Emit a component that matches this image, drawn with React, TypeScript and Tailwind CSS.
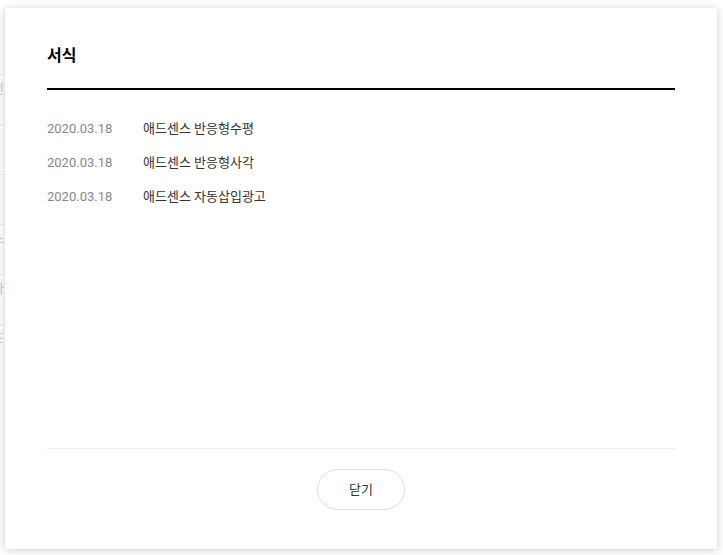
const POSTS = [
  { date: '2020.03.18', title: '애드센스 반응형수평' },
  { date: '2020.03.18', title: '애드센스 반응형사각' },
  { date: '2020.03.18', title: '애드센스 자동삽입광고' },
];

const BACKDROP_ROWS = ['전', '', '', '스', '아', '조'];

export default function App() {
  return (
    <div className="relative h-[555px] w-[723px] overflow-hidden bg-white font-['Roboto','Noto_Sans_CJK_KR',sans-serif]">
      {/* page behind the layer, mostly hidden */}
      <div className="-ml-[8px] flex w-[60px] flex-col pt-[74px] text-[13px] text-[#ccc]">
        {BACKDROP_ROWS.map((ch, i) => (
          <div key={i} className="h-[50px] border-t border-[#eee] pt-[2px] leading-[24px]">
            {ch}
          </div>
        ))}
      </div>

      {/* layer */}
      <div className="absolute left-[5px] top-[8px] flex h-[541px] w-[712px] flex-col bg-white px-[42px] shadow-[0_1px_8px_rgba(0,0,0,0.2)]">
        <div className="border-b-2 border-black pt-[36px] pb-[20px]">
          <h2 className="text-[16px] font-bold leading-[24px] text-black">서식</h2>
        </div>

        <ul className="pt-[22px]">
          {POSTS.map((post) => (
            <li key={post.title} className="flex h-[34px] items-center text-[13px]">
              <span className="w-[96px] text-[#888]">{post.date}</span>
              <span className="text-[#333]">{post.title}</span>
            </li>
          ))}
        </ul>

        <div className="flex-1" />

        <div className="flex justify-center border-t border-[#eee] pt-[20px] pb-[39px]">
          <button className="h-[41px] w-[88px] rounded-full border border-[#ddd] bg-white text-[13px] text-[#333]">
            닫기
          </button>
        </div>
      </div>
    </div>
  );
}
